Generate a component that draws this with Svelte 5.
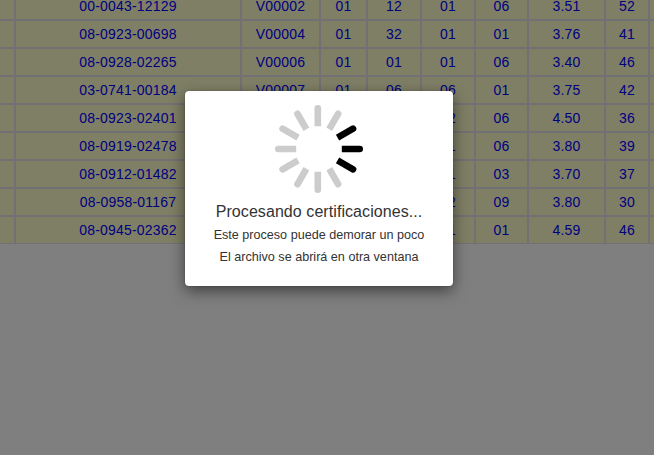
<script>
  const rows = [
    ['00-0043-12129', 'V00002', '01', '12', '01', '06', '3.51', '52'],
    ['08-0923-00698', 'V00004', '01', '32', '01', '01', '3.76', '41'],
    ['08-0928-02265', 'V00006', '01', '01', '01', '06', '3.40', '46'],
    ['03-0741-00184', 'V00007', '01', '06', '06', '01', '3.75', '42'],
    ['08-0923-02401', '', '', '', '02', '06', '4.50', '36'],
    ['08-0919-02478', '', '', '', '01', '06', '3.80', '39'],
    ['08-0912-01482', '', '', '', '01', '03', '3.70', '37'],
    ['08-0958-01167', '', '', '', '02', '09', '3.80', '30'],
    ['08-0945-02362', '', '', '', '01', '01', '4.59', '46'],
  ];
  const spokes = Array.from({ length: 12 }, (_, i) => i * 30);
</script>

<div class="page">
  <div class="table">
    {#each rows as row}
      <div class="row">
        <span></span>
        {#each row as cell}
          <span>{cell}</span>
        {/each}
        <span></span>
      </div>
    {/each}
  </div>

  <div class="dialog" role="dialog">
    <svg class="spinner" width="90" height="90" viewBox="-45 -45 90 90">
      {#each spokes as angle}
        <path
          d="M-3.3 -22.8V-40.7A3.3 3.3 0 0 1 3.3 -40.7V-22.8Z"
          transform="translate({angle % 180 === 90 ? 0 : -1.2} 0) rotate({angle})"
          fill={angle >= 60 && angle <= 120 ? '#000' : '#ccc'}
        />
      {/each}
    </svg>
    <div class="title">Procesando certificaciones...</div>
    <div class="line">Este proceso puede demorar un poco</div>
    <div class="line">El archivo se abrirá en otra ventana</div>
  </div>
</div>

<style>
  .page {
    position: relative;
    width: 654px;
    height: 455px;
    overflow: hidden;
    background: #7f7f7f;
    font-family: 'Liberation Sans', Arial, sans-serif;
  }
  .table {
    display: grid;
    gap: 2px;
    margin-top: -7px;
    padding-bottom: 1px;
    width: 664px;
    background: #717174;
  }
  .row {
    display: grid;
    grid-template-columns: 14px 224px 77px 45px 52px 52px 51px 75px 42px 14px;
    column-gap: 2px;
    height: 26px;
  }
  .row span {
    background: #7f7f66;
    color: #00007f;
    font-size: 14px;
    line-height: 26px;
    letter-spacing: 0.2px;
    text-align: center;
  }
  .dialog {
    position: absolute;
    left: 185px;
    top: 91px;
    box-sizing: border-box;
    width: 268px;
    height: 195px;
    padding-top: 13px;
    display: flex;
    flex-direction: column;
    align-items: center;
    background: #fff;
    border-radius: 4px;
    box-shadow: 0 5px 15px rgba(0, 0, 0, 0.5), 0 0 1px rgba(0, 0, 0, 0.6);
    color: #333;
    white-space: nowrap;
  }
  .spinner {
    display: block;
  }
  .title {
    margin: 7px 0 1px;
    font-size: 16px;
    line-height: 22px;
    letter-spacing: 0.07px;
  }
  .line {
    font-size: 12.6px;
    line-height: 22px;
    letter-spacing: 0;
  }
</style>
